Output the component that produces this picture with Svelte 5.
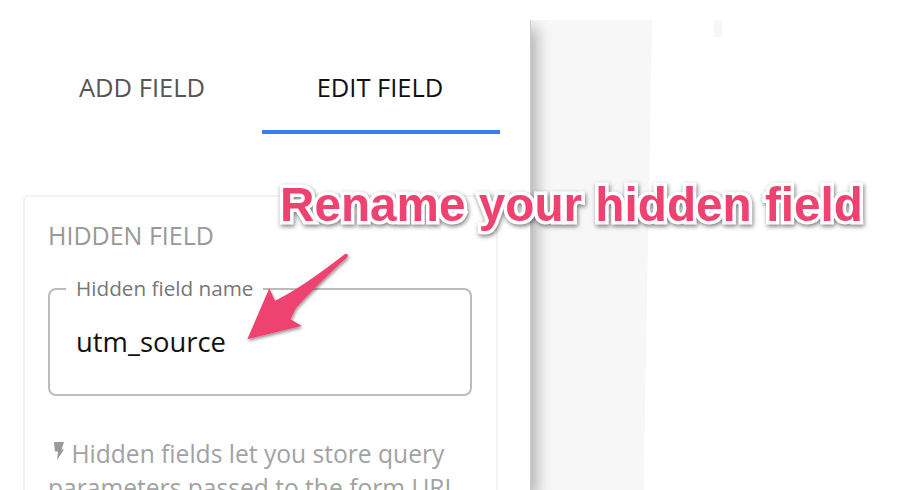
<script>
	const tabs = [
		{ label: 'ADD FIELD', active: false },
		{ label: 'EDIT FIELD', active: true }
	];
</script>

<div class="page">
	<div class="builder">
		<aside class="panel">
			<nav class="tabs">
				{#each tabs as tab}
					<div class="tab" class:active={tab.active}>{tab.label}</div>
				{/each}
			</nav>

			<section class="card">
				<h3>HIDDEN FIELD</h3>
				<fieldset>
					<legend>Hidden field name</legend>
					<div class="value">utm_source</div>
				</fieldset>
				<p class="help">
					<svg class="bolt" viewBox="0 0 10 18" width="10" height="18">
						<path d="M0 0 H10 L7.5 7.5 H10 L3 18 L4 9.5 H1 Z" fill="#999" />
					</svg>
					Hidden fields let you store query parameters passed to the form URL
				</p>
			</section>
		</aside>

		<div class="canvas">
			<div class="sheet"></div>
			<div class="notch"></div>
		</div>
	</div>

	<div class="callout">Rename your hidden field</div>

	<svg class="arrow" viewBox="0 0 914 490" width="914" height="490">
		<defs>
			<filter id="drop" x="-20%" y="-20%" width="140%" height="140%">
				<feDropShadow dx="1" dy="2" stdDeviation="1.5" flood-color="#000" flood-opacity="0.4" />
			</filter>
		</defs>
		<path
			d="M345 254 Q348 253 348 256 Q346 259 342 262 Q316 286 296 308 L290.7 319.3 L301.7 326 L247.3 339.3 L269.3 288.3 L275 300.7 Q300 289 345 254 Z"
			fill="#ee4370"
			filter="url(#drop)"
		/>
	</svg>
</div>

<style>
	:global(body) {
		margin: 0;
		background: #fff;
	}

	.page {
		position: relative;
		width: 914px;
		height: 490px;
		overflow: hidden;
		padding-top: 20px;
		box-sizing: border-box;
		font-family: 'Open Sans', 'Noto Sans', sans-serif;
	}

	.builder {
		display: flex;
		height: 470px;
		overflow: hidden;
	}

	.panel {
		position: relative;
		z-index: 1;
		width: 531px;
		flex-shrink: 0;
		box-sizing: border-box;
		background: #fff;
		border-right: 1px solid #ccc;
		box-shadow: 6px 8px 14px rgba(0, 0, 0, 0.28);
		padding: 0 30px 0 24px;
		overflow: hidden;
	}

	.tabs {
		display: grid;
		grid-template-columns: 1fr 1fr;
		height: 114px;
		margin-bottom: 61px;
	}

	.tab {
		display: flex;
		justify-content: center;
		box-sizing: border-box;
		padding: 49.5px 2px 0 0;
		font-size: 25.5px;
		line-height: 34px;
		color: #555;
	}

	.tab.active {
		color: #111;
		border-bottom: 4px solid #3b7cf0;
	}

	.card {
		box-sizing: border-box;
		width: 475px;
		height: 320px;
		margin-left: -1px;
		border: 2px solid #f3f3f3;
		border-radius: 5px;
		padding: 23px 24px 0 23px;
	}

	h3 {
		margin: 0 0 23.5px;
		font-size: 25px;
		font-weight: 400;
		line-height: 30px;
		color: #999;
	}

	fieldset {
		box-sizing: border-box;
		width: 424px;
		height: 122.5px;
		margin: 0;
		padding: 0 26px 0 16px;
		border: 2px solid #bcbcbc;
		border-radius: 8px;
	}

	legend {
		padding: 0 10px 3px;
		font-size: 20.7px;
		line-height: 28px;
		color: #777;
	}

	.value {
		margin: 20.5px 0 0 10px;
		font-size: 27.4px;
		line-height: 34px;
		color: #111;
	}

	.help {
		margin: 41px 0 0;
		font-size: 24.6px;
		line-height: 34px;
		color: #a2a2a2;
	}

	.bolt {
		vertical-align: 3px;
		margin: 0 1px 0 6px;
	}

	.canvas {
		position: relative;
		flex: 1;
	}

	.sheet {
		position: absolute;
		inset: 0 auto 0 0;
		width: 121px;
		background: #f7f7f7;
		clip-path: polygon(0 0, 100% 0, 93% 100%, 0 100%);
	}

	.notch {
		position: absolute;
		top: 0;
		left: 183px;
		width: 8px;
		height: 17px;
		background: #f7f7f7;
	}

	.callout {
		position: absolute;
		z-index: 2;
		left: 280px;
		top: 176px;
		font-family: 'Liberation Sans', Arial, sans-serif;
		font-size: 47.7px;
		font-weight: 700;
		line-height: 58px;
		white-space: nowrap;
		color: #ee4370;
		-webkit-text-stroke: 7px #fff;
		paint-order: stroke fill;
		filter: drop-shadow(1px 2px 2px rgba(0, 0, 0, 0.5));
	}

	.arrow {
		position: absolute;
		z-index: 2;
		inset: 0;
		pointer-events: none;
	}
</style>
